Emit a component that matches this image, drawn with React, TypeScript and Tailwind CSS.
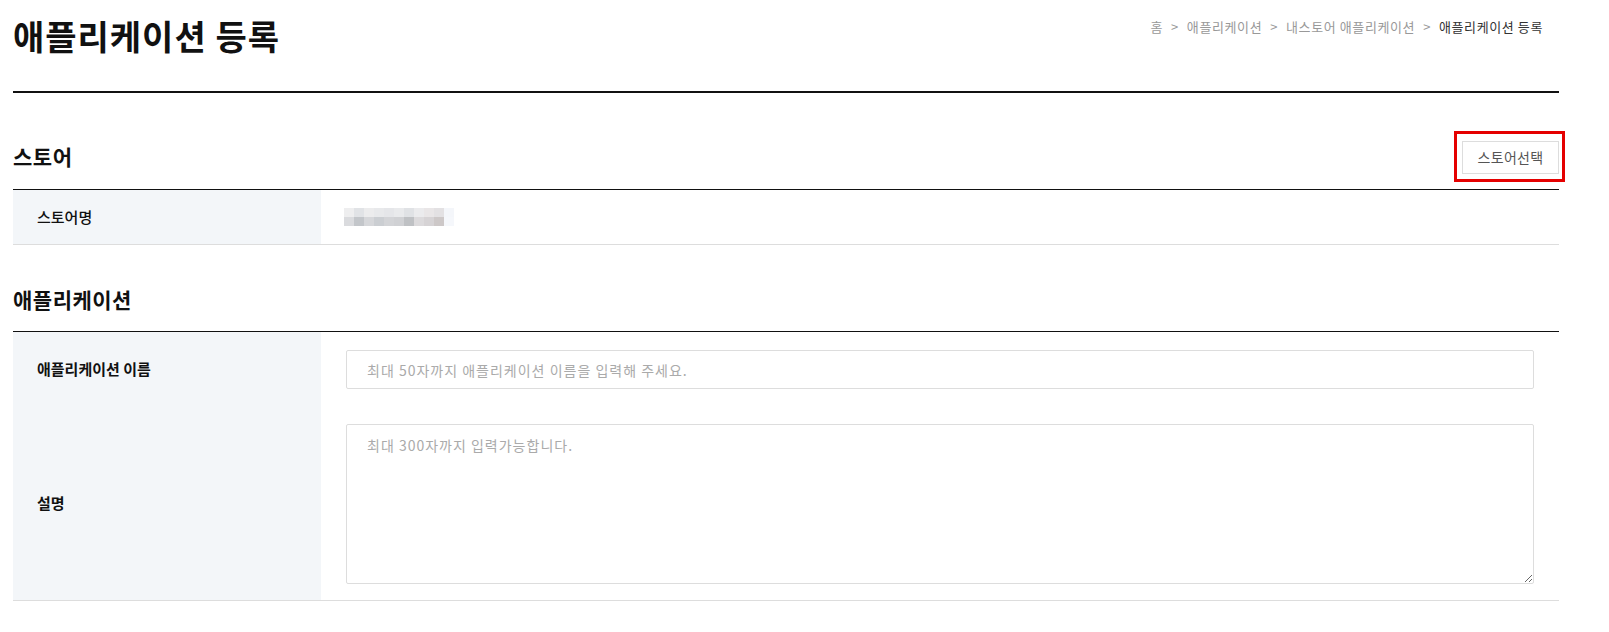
import React from "react";

const crumbs = ["홈", "애플리케이션", "내스토어 애플리케이션"];

// pixelated store name (blurred in the source)
const mosaic = [
  ["#eeeeef", "#e1e3e6", "#ececed", "#e8e9eb", "#e5e6e9", "#e9eaec", "#e0e2e5", "#ebebed", "#e9e6e7", "#e3e1e3", "#f4f6fa"],
  ["#dadbde", "#c3c6ca", "#d6d7da", "#cbced2", "#d3d4d7", "#d0d1d4", "#bfc1c4", "#dcdadc", "#d6d3d5", "#cdc8c8", "#f5f7fb"],
];

const App: React.FC = () => {
  return (
    <div className="bg-white min-h-[632px] pl-[13px] font-['Noto_Sans_CJK_KR','Noto_Sans',sans-serif] text-[#111]">
      <div className="w-[1546px]">
        <div className="flex items-start justify-between h-[93px] border-b-2 border-[#111]">
          <h1 className="mt-[12px] text-[34px] font-bold leading-[48px] tracking-[1px]">애플리케이션 등록</h1>
          <nav className="mt-[17px] mr-[16px] flex items-center text-[13px] leading-[20px] tracking-[0.6px] text-[#999]">
            {crumbs.map((c) => (
              <span key={c} className="flex items-center">
                <span>{c}</span>
                <span className="mx-[8px]">&gt;</span>
              </span>
            ))}
            <span className="text-[#333]">애플리케이션 등록</span>
          </nav>
        </div>

        <div className="flex items-end justify-between h-[96px]">
          <h2 className="mb-[18px] text-[21px] font-bold leading-[30px] tracking-[0.5px]">스토어</h2>
          <div className="relative mb-[15px]">
            <button className="h-[33px] w-[97px] border border-[#ddd] bg-white text-[14px] tracking-[0.3px] text-[#555]">스토어선택</button>
            <div className="absolute -left-[8px] -top-[10px] h-[51px] w-[111px] border-[3px] border-[#e50000] pointer-events-none" />
          </div>
        </div>

        <div className="border-t border-[#111]">
          <div className="flex h-[55px] border-b border-[#ddd]">
            <div className="w-[308px] bg-[#f3f6f9] pl-[24px] flex items-center text-[15px] font-medium">스토어명</div>
            <div className="flex-1 flex items-center pl-[23px]">
              <div className="flex flex-col">
                {mosaic.map((row, i) => (
                  <div key={i} className="flex">
                    {row.map((c, j) => (
                      <div key={j} className="w-[10px] h-[9px] bg-[var(--c)]" style={{ ["--c" as string]: c }} />
                    ))}
                  </div>
                ))}
              </div>
            </div>
          </div>
        </div>

        <div className="flex items-center h-[86px] pt-[22px]">
          <h2 className="text-[21px] font-bold leading-[30px] tracking-[0.5px]">애플리케이션</h2>
        </div>

        <div className="border-t border-[#111]">
          <div className="flex border-b border-[#ddd]">
            <div className="w-[308px] bg-[#f3f6f9] flex flex-col">
              <div className="h-[74px] pl-[24px] flex items-center text-[15px] font-bold">애플리케이션 이름</div>
              <div className="flex-1 pl-[24px] flex items-center text-[15px] font-bold">설명</div>
            </div>
            <div className="flex-1 px-[25px] pt-[18px] pb-[16px] flex flex-col gap-[35px]">
              <input
                className="h-[39px] w-full border border-[#ddd] rounded-[2px] px-[20px] text-[14px] tracking-[1px] outline-none placeholder:text-[#aaa]"
                placeholder="최대 50자까지 애플리케이션 이름을 입력해 주세요."
              />
              <textarea
                className="h-[160px] w-full border border-[#ddd] rounded-[2px] px-[20px] py-[10px] text-[14px] tracking-[1px] outline-none resize placeholder:text-[#aaa]"
                placeholder="최대 300자까지 입력가능합니다."
              />
            </div>
          </div>
        </div>
      </div>
    </div>
  );
};

export default App;
